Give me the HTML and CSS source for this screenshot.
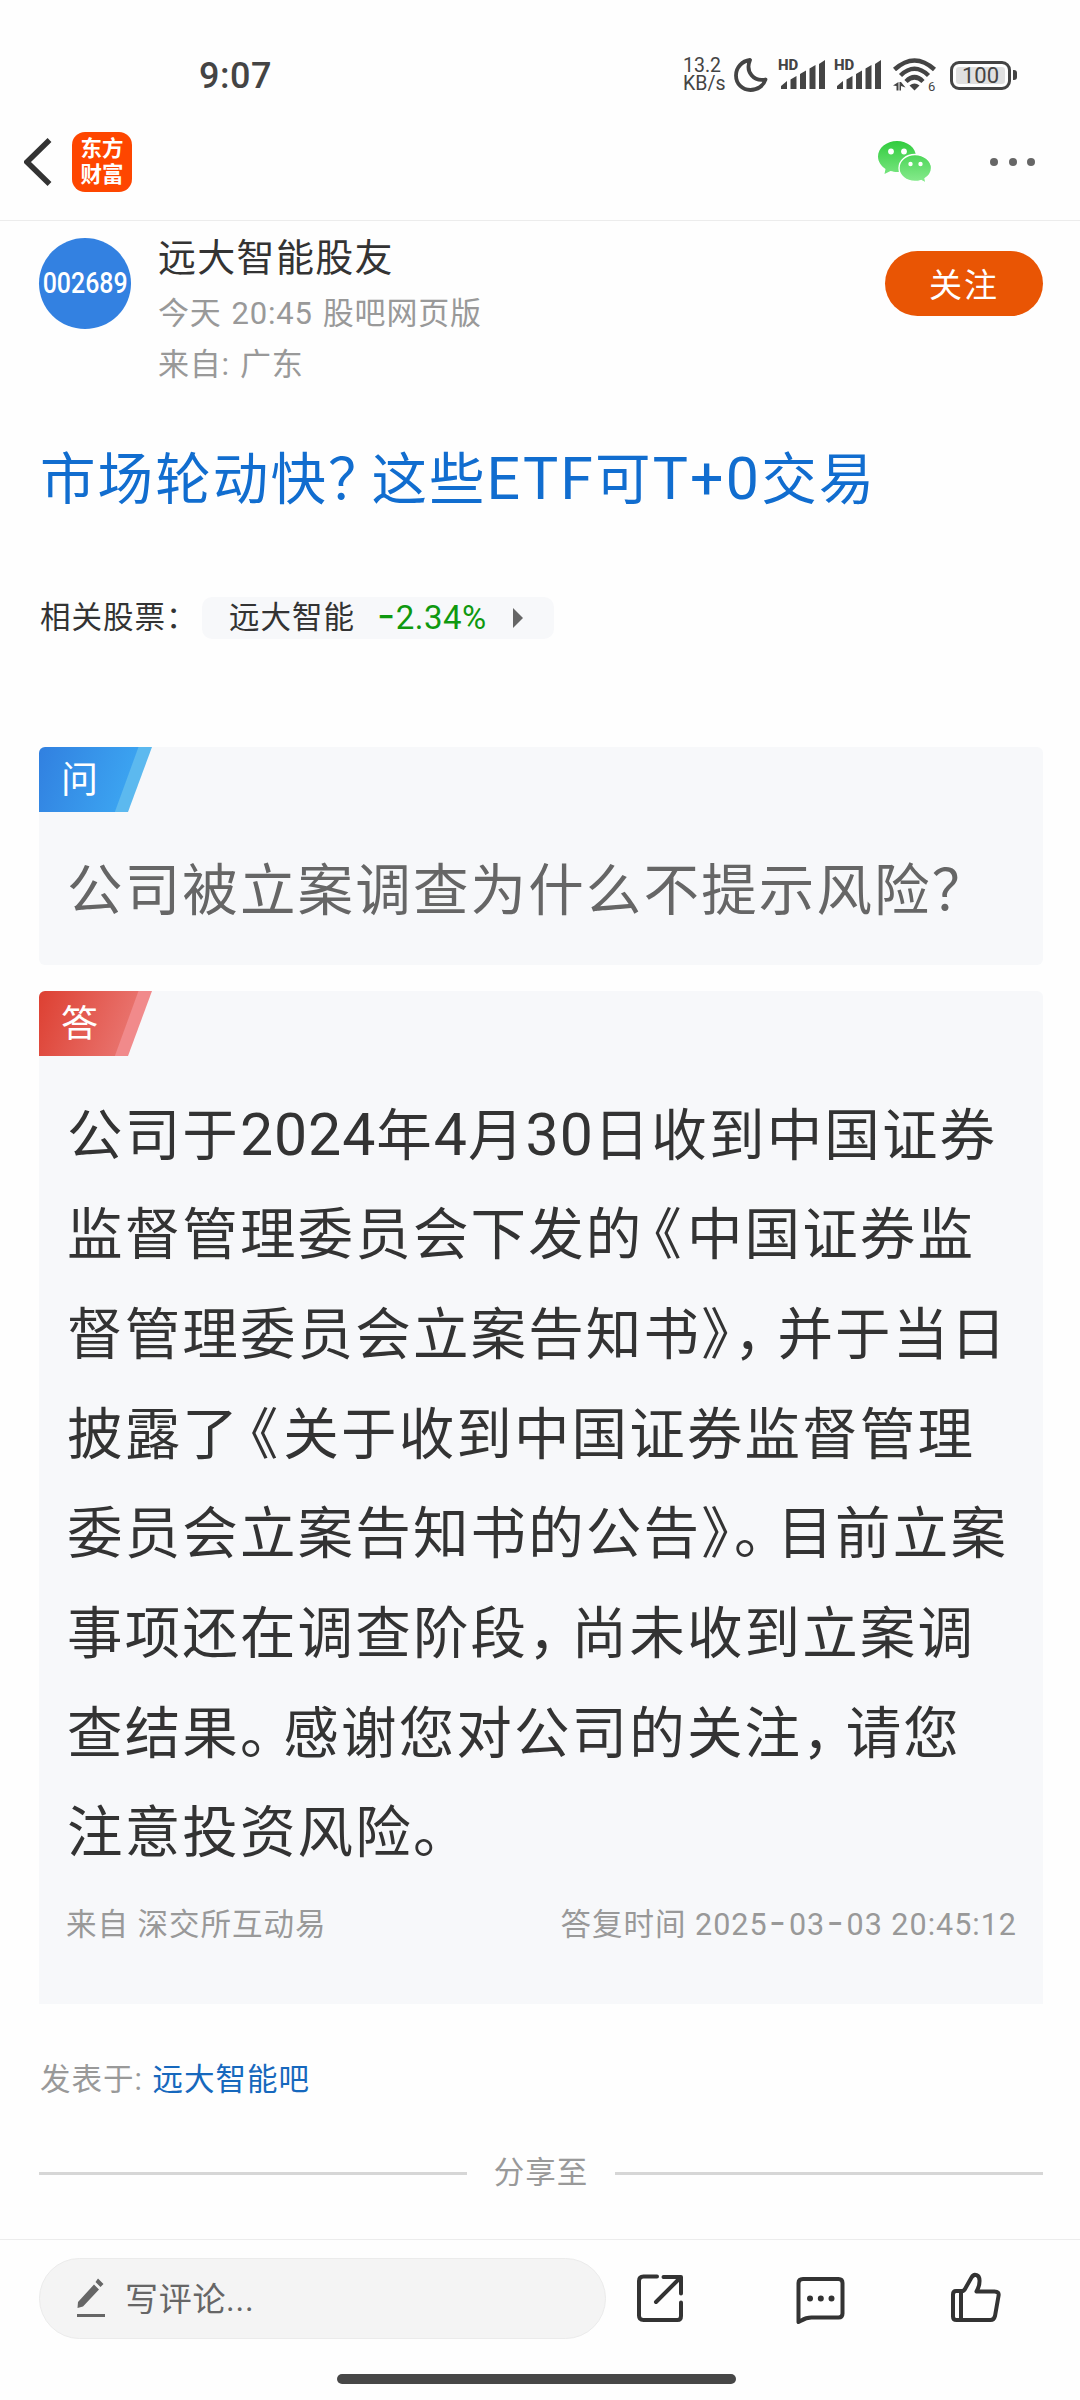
FILE: index.html
```
<!DOCTYPE html>
<html lang="zh-CN">
<head>
    <meta charset="UTF-8">
    <meta name="viewport" content="width=device-width, initial-scale=1.0">
    <title>远大智能股友 - 股吧</title>
    <link rel="stylesheet" href="styles.css">
</head>
<body>
    <div class="screen">
        <!-- Status bar -->
        <div class="status-bar">
            <span class="clock">9:07</span>
            <div class="status-right">
                <div class="net-speed"><span>13.2</span><span>KB/s</span></div>
                <svg class="moon" width="34" height="34" viewBox="0 0 34 34">
                    <path d="M16 2C8 3 2 9.500 2 17.500C2 26 8.500 32 16.500 32C23.500 32 29.500 28 31.500 21.500C20 24 11 14 16 2Z" fill="none" stroke="#444" stroke-width="3.800" stroke-linejoin="round"/>
                </svg>
                <div class="signal">
                    <span class="hd">HD</span>
                    <svg width="46" height="30" viewBox="0 0 46 30" fill="#444">
                        <path d="M2 29V26L8 21V29ZM11.500 29V19.500L17.500 16V29ZM21 29V14L27 10.500V29ZM30.500 29V8.500L36.500 5V29ZM40 29V4L46 0V29Z"/>
                    </svg>
                </div>
                <div class="signal">
                    <span class="hd">HD</span>
                    <svg width="46" height="30" viewBox="0 0 46 30" fill="#444">
                        <path d="M2 29V26L8 21V29ZM11.500 29V19.500L17.500 16V29ZM21 29V14L27 10.500V29ZM30.500 29V8.500L36.500 5V29ZM40 29V4L46 0V29Z"/>
                    </svg>
                </div>
                <svg class="wifi" width="46" height="38" viewBox="0 -2 46 38">
                    <g fill="none" stroke="#444" stroke-width="4.500">
                        <path d="M1.500 11.500Q21.500 -6.500 41.500 11.500"/>
                        <path d="M7.500 17.500Q21.500 4 35.500 17.500"/>
                        <path d="M13 23.500Q21.500 15 30 23.500"/>
                    </g>
                    <path d="M16.500 27.500Q21.500 23.500 26.500 27.500L21.500 32.500Z" fill="#444"/>
                    <path d="M0 27.500L5.500 24V32.500H3.500V28ZM6.500 24V32.500H8V28L12.500 29.500L8 24Z" fill="#444"/>
                    <text x="35" y="32.500" class="wifi-gen">6</text>
                </svg>
                <div class="battery"><span>100</span></div>
                <span class="battery-tip"></span>
            </div>
        </div>

        <!-- App header -->
        <header class="header">
            <svg width="28" height="48" viewBox="0 0 28 48">
                <path d="M25.500 2L3 24L25.500 46" fill="none" stroke="#333" stroke-width="5.500"/>
            </svg>
            <a href="#" class="logo"><span>东方</span><span>财富</span></a>
            <svg class="wechat" width="54" height="44" viewBox="0 0 54 44">
                <defs>
                    <linearGradient id="wx" x1="0" y1="0" x2="0" y2="44" gradientUnits="userSpaceOnUse">
                        <stop offset="0" stop-color="#2fcb3c"/>
                        <stop offset="1" stop-color="#8bec91"/>
                    </linearGradient>
                </defs>
                <path d="M19 1C8.500 1 0 8 0 16.500C0 21.500 3 26 7.500 29L6.500 34L12.500 31C14.500 31.500 17 32 19 32C29.500 32 38 25 38 16.500C38 8 29.500 1 19 1Z" fill="url(#wx)"/>
                <circle cx="13" cy="11.500" r="2.900" fill="#fff"/>
                <circle cx="26" cy="11.500" r="2.900" fill="#fff"/>
                <path d="M37 14.500C28 14.500 21 20.500 21 28C21 35.500 28 41.500 37 41.500C39 41.500 41 41.200 43 40.500L48 43L47 38.500C51 36 53.500 32 53.500 28C53.500 20.500 46 14.500 37 14.500Z" fill="url(#wx)" stroke="#fff" stroke-width="1.300"/>
                <circle cx="32.500" cy="24" r="2.200" fill="#fff"/>
                <circle cx="42.500" cy="24" r="2.200" fill="#fff"/>
            </svg>
            <div class="more"><i></i><i></i><i></i></div>
        </header>

        <main class="post">
            <!-- Author -->
            <section class="author">
                <div class="avatar"><span>002689</span></div>
                <div class="author-info">
                    <div class="author-name">远大智能股友</div>
                    <div class="author-meta">今天 20:45 股吧网页版</div>
                    <div class="author-meta">来自: 广东</div>
                </div>
                <a href="#" class="follow-btn">关注</a>
            </section>

            <h1 class="post-title">市场轮动快<span class="stop">？</span>这些<span class="latin">ETF</span>可<span class="latin">T+0</span>交易</h1>

            <!-- Related stocks -->
            <div class="related">
                <span class="related-label">相关股票：</span>
                <a href="#" class="stock">
                    <span class="stock-name">远大智能</span>
                    <span class="stock-change"><span class="dash">-</span>2.34%</span>
                    <span class="stock-arrow"></span>
                </a>
            </div>

            <!-- Question -->
            <section class="qa question">
                <div class="tag tag-blue"><span>问</span></div>
                <p class="qa-text">公司被立案调查为什么不提示风险？</p>
            </section>

            <!-- Answer -->
            <section class="qa answer">
                <div class="tag tag-red"><span>答</span></div>
                <p class="qa-text">公司于<span class="num">2024</span>年<span class="num">4</span>月<span class="num">30</span>日收到中国证券<br>监督管理委员会下发的<span class="open">《</span>中国证券监<br>督管理委员会立案告知书<span class="close">》</span><span class="stop">，</span>并于当日<br>披露了<span class="open">《</span>关于收到中国证券监督管理<br>委员会立案告知书的公告<span class="close">》</span><span class="stop">。</span>目前立案<br>事项还在调查阶段<span class="stop">，</span>尚未收到立案调<br>查结果<span class="stop">。</span>感谢您对公司的关注<span class="stop">，</span>请您<br>注意投资风险。</p>
                <div class="qa-footer">
                    <span>来自 深交所互动易</span>
                    <span>答复时间 2025<span class="dash">-</span>03<span class="dash">-</span>03 20:45:12</span>
                </div>
            </section>

            <div class="posted">发表于: <a href="#">远大智能吧</a></div>
            <div class="share">分享至</div>
        </main>

        <!-- Bottom bar -->
        <footer class="bottom-bar">
            <div class="comment-input">
                <svg width="28" height="40" viewBox="0 0 28 40">
                    <path d="M17 7.500L22 12.500L6 29.500L0.500 31L1 25ZM18.500 5L21 1.500L26.500 7L23.500 10Z" fill="#666"/>
                    <path d="M0 38.500H28" stroke="#666" stroke-width="3"/>
                </svg>
                <span>写评论...</span>
            </div>
            <div class="actions">
                <svg width="54" height="54" viewBox="0 0 54 54">
                    <path d="M24 6.500H10.500Q6 6.500 6 11V45.500Q6 50 10.500 50H44.500Q48 50 48 46V32.500M30.500 7H48V23.500M47 8L23 32"/>
                </svg>
                <svg width="54" height="54" viewBox="0 0 54 54">
                    <path d="M11 9H46.500Q50.500 9 50.500 13V43.500Q50.500 47.500 46.500 47.500H19.500Q14 47.500 9.500 50.500L6.500 52V13Q6.500 9 11 9Z"/>
                    <path d="M18 28.500h.01M28.800 28.500h.01M39.500 28.500h.01" stroke-width="6"/>
                </svg>
                <svg width="54" height="54" viewBox="0 0 54 54">
                    <path d="M6 21H12Q14 21 15 19L21.500 7.500C24 3 30 4.500 29.500 11.500Q29.500 16 26.500 21.500H44.500Q49.500 21.500 48.500 26L45 46Q44 50 40.500 50H6.500Q3 50 3 46.500V24.500Q3 21 6 21ZM11 21V50"/>
                </svg>
            </div>
        </footer>
        <div class="home-indicator"></div>
    </div>
</body>
</html>
```
FILE: styles.css
```
:root {
    --text: #333;
    --text-medium: #666;
    --text-light: #999;
    --link: #116dcf;
    --card: #f7f8fa;
    --line: #ececec;
}

* {
    margin: 0;
    padding: 0;
    box-sizing: border-box;
}

body {
    background-color: #fefefe;
    color: var(--text);
    font-family: Roboto, 'Noto Sans CJK SC', sans-serif;
    text-spacing-trim: space-all;
}

a {
    text-decoration: none;
}

svg {
    display: block;
    flex: none;
}

.screen {
    width: 1080px;
    height: 2400px;
    display: flex;
    flex-direction: column;
    overflow: hidden;
}

/* Status bar */
.status-bar {
    height: 104px;
    padding: 46px 63px 0 199px;
    display: flex;
    justify-content: space-between;
    align-items: center;
    color: #444;
}

.clock {
    padding-top: 2px;
    font-size: 36px;
    font-weight: 500;
    letter-spacing: 0.5px;
}

.status-right {
    display: flex;
    align-items: center;
}

.net-speed {
    display: flex;
    flex-direction: column;
    width: 51px;
    font-size: 19.500px;
    line-height: 18.500px;
}

.moon {
    margin-right: 11px;
}

.signal {
    position: relative;
    width: 46px;
    margin-right: 10px;
}

.signal .hd {
    position: absolute;
    top: -2px;
    left: -1px;
    font-size: 15px;
    line-height: 15px;
    font-weight: 800;
}

.wifi {
    margin-left: 2px;
    margin-right: 11px;
}

.wifi-gen {
    font-size: 13px;
    fill: #444;
}

.battery {
    width: 61px;
    height: 29px;
    border: 3px solid #444;
    border-radius: 9px;
    background-color: #e0e0e0;
    box-shadow: inset 0 0 0 3px #fefefe;
    text-align: center;
    font-size: 22px;
    line-height: 24px;
}

.battery-tip {
    width: 4px;
    height: 10px;
    margin-left: 2px;
    border-radius: 0 3px 3px 0;
    background-color: #444;
}

/* Header */
.header {
    height: 117px;
    padding: 0 45px 0 24px;
    display: flex;
    align-items: center;
    border-bottom: 1px solid var(--line);
}

.logo {
    width: 60px;
    height: 60px;
    margin-left: 20px;
    border-radius: 13px;
    background-color: #fe4600;
    color: #fff;
    display: flex;
    flex-direction: column;
    align-items: center;
    justify-content: center;
    font-size: 21.500px;
    font-weight: 700;
    line-height: 26px;
}

.wechat {
    margin-left: auto;
    margin-right: 58px;
}

.more {
    display: flex;
    gap: 10.500px;
}

.more i {
    width: 8px;
    height: 8px;
    border-radius: 50%;
    background-color: #666;
}

/* Author */
.post {
    height: 2018px;
    padding: 17px 37px 0 39px;
}

.author {
    display: flex;
    height: 170px;
}

.avatar {
    width: 92px;
    height: 91px;
    border-radius: 50%;
    background-color: #3381e1;
    color: #fff;
    display: flex;
    align-items: center;
    justify-content: center;
    font-size: 30px;
    font-weight: 500;
}

.avatar span {
    transform: scaleX(0.83);
    margin-top: -3px;
}

.author-info {
    flex: 1;
    margin-left: 27px;
}

.author-name {
    font-size: 38px;
    letter-spacing: 1.300px;
    line-height: 42px;
    margin-top: -1px;
    margin-bottom: 9px;
}

.author-meta {
    font-size: 31px;
    letter-spacing: 0.800px;
    line-height: 51px;
    word-spacing: 1.500px;
    color: var(--text-light);
}

.follow-btn {
    width: 158px;
    height: 65px;
    margin-top: 13px;
    border-radius: 33px;
    background-color: #e95504;
    color: #fff;
    font-size: 33px;
    letter-spacing: 2px;
    line-height: 70px;
    text-align: center;
}

.post-title {
    margin-left: 1px;
    font-size: 55.500px;
    font-weight: 400;
    letter-spacing: 2.100px;
    line-height: 100px;
    padding-top: 21px;
    height: 188px;
    color: var(--link);
    white-space: nowrap;
}

.latin {
    font-size: 59px;
    letter-spacing: 2.200px;
}

.num {
    font-size: 59px;
    letter-spacing: 0.900px;
}

/* Punctuation is a little wider than half an em */
.open,
.close,
.stop {
    font-feature-settings: "halt";
}

.open {
    margin-left: 10.500px;
    margin-right: 3px;
}

.close {
    margin-right: 3px;
}

.stop {
    margin-right: 13.500px;
}

/* Related stocks */
.related {
    display: flex;
    align-items: center;
    height: 43px;
    font-size: 30.500px;
    letter-spacing: 1px;
    line-height: 44px;
}

.related-label {
    width: 163px;
    padding-top: 1px;
    padding-left: 1px;
    white-space: nowrap;
}

.stock {
    width: 352px;
    height: 42px;
    padding: 0 31px 0 27px;
    border-radius: 10px;
    background-color: var(--card);
    color: var(--text);
    display: flex;
    align-items: center;
}

.stock-name {
    padding-top: 1px;
}

.stock-change {
    margin-left: 22px;
    font-size: 33px;
    letter-spacing: 0.500px;
    color: #0f990f;
}

.stock-arrow {
    margin-left: auto;
    border: solid transparent;
    border-width: 10px 0 10px 10px;
    border-left-color: #666;
}

.dash {
    font-family: Inter, sans-serif;
    font-size: 1.2em;
    line-height: 1;
}

/* Question and answer */
.qa {
    width: 1004px;
    background-color: var(--card);
}

.question {
    height: 218px;
    margin-top: 108px;
    border-radius: 6px;
    color: var(--text-medium);
}

.answer {
    height: 1013px;
    margin-top: 26px;
    border-radius: 6px 6px 0 0;
}

.tag {
    width: 113px;
    height: 65px;
    padding-left: 22px;
    border-top-left-radius: 6px;
    clip-path: polygon(0 0, 100% 0, 89px 100%, 0 100%);
    color: #fff;
    font-size: 37px;
    line-height: 68px;
}

.tag-blue {
    background: linear-gradient(110deg, #3180e0 0, #3ba2f0 93px, #5cb9ef 94px);
}

.tag-red {
    background: linear-gradient(110deg, #dd4032 0, #e8706a 93px, #f18a8b 94px);
}

.qa-text {
    padding: 28.500px 0 0 28px;
    font-size: 55.500px;
    letter-spacing: 2.150px;
    line-height: 99.700px;
    white-space: nowrap;
}

.question .qa-text {
    padding-top: 30px;
}

.qa-footer {
    display: flex;
    justify-content: space-between;
    padding: 16px 26px 0 27px;
    font-size: 30.500px;
    letter-spacing: 1px;
    line-height: 50px;
    color: var(--text-light);
}

.qa-footer .dash {
    margin: 0 2px 0 1.500px;
}

/* Posted in and share */
.posted {
    margin-top: 50px;
    padding-left: 1px;
    font-size: 30.500px;
    letter-spacing: 1px;
    line-height: 52px;
    word-spacing: 1px;
    color: var(--text-light);
}

.posted a {
    color: #1668bd;
}

.share {
    display: flex;
    align-items: center;
    gap: 27px;
    width: 1004px;
    margin-top: 41px;
    font-size: 30.500px;
    letter-spacing: 1px;
    line-height: 52px;
    color: var(--text-light);
}

.share::before,
.share::after {
    content: "";
    flex: 1;
    height: 3px;
    background-color: #d6d6d6;
}

/* Bottom bar */
.bottom-bar {
    height: 135px;
    padding: 18px 76px 0 39px;
    display: flex;
    border-top: 1px solid var(--line);
}

.comment-input {
    width: 567px;
    height: 81px;
    padding-left: 37px;
    border: 1px solid #ebebeb;
    border-radius: 41px;
    background-color: #f4f4f4;
    color: var(--text-medium);
    display: flex;
    align-items: center;
    gap: 20px;
    font-size: 33px;
    letter-spacing: 0.700px;
}

.comment-input svg {
    margin-top: -3px;
}

.comment-input span {
    margin-top: -4px;
}

.actions {
    flex: 1;
    display: flex;
    justify-content: space-between;
    padding: 12px 0 0 27px;
}

.actions svg {
    fill: none;
    stroke: #333;
    stroke-width: 4;
    stroke-linecap: round;
    stroke-linejoin: round;
}

.home-indicator {
    width: 399px;
    height: 10px;
    margin-left: 337px;
    border-radius: 5px;
    background-color: #474747;
}
```
